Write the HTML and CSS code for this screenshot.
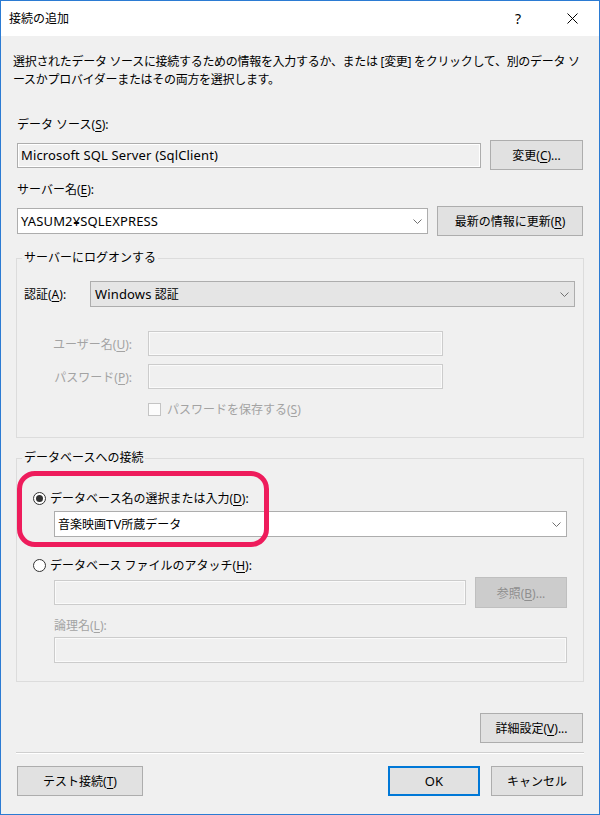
FILE: index.html
```html
<!DOCTYPE html>
<html lang="ja">
<head>
    <meta charset="UTF-8">
    <title>接続の追加</title>
    <link rel="stylesheet" href="styles.css">
</head>
<body>
    <div class="window">
        <div class="titlebar">
            <span class="title">接続の追加</span>
            <span class="help">?</span>
            <span class="close">
                <svg width="11" height="11" viewBox="0 0 11 11"><path d="M0.5 0.5 L10.5 10.5 M10.5 0.5 L0.5 10.5" stroke="#000" stroke-width="1" fill="none"/></svg>
            </span>
        </div>

        <div class="content">
            <p class="desc">選択されたデータ ソースに接続するための情報を入力するか、または [変更] をクリックして、別のデータ ソ<br>ースかプロバイダーまたはその両方を選択します。</p>

            <div class="label lbl-source">データ ソース(<u>S</u>):</div>
            <div class="row row-source">
                <div class="field readonly"><span class="en">Microsoft SQL Server (SqlClient)</span></div>
                <button class="btn btn-change">変更(<u>C</u>)...</button>
            </div>

            <div class="label lbl-server">サーバー名(<u>E</u>):</div>
            <div class="row row-server">
                <div class="field combo server-combo">
                    <span class="value en">YASUM2¥SQLEXPRESS</span>
                    <svg class="chev" width="9" height="5" viewBox="0 0 9 5"><path d="M0.5 0.5 L4.5 4.5 L8.5 0.5" fill="none" stroke="#707070"/></svg>
                </div>
                <button class="btn btn-refresh">最新の情報に更新(<u>R</u>)</button>
            </div>

            <fieldset class="group group-logon">
                <legend>サーバーにログオンする</legend>
                <div class="row auth-row">
                    <span class="auth-label">認証(<u>A</u>):</span>
                    <div class="field dropdown">
                        <span class="value"><span class="en">Windows</span> 認証</span>
                        <svg class="chev" width="9" height="5" viewBox="0 0 9 5"><path d="M0.5 0.5 L4.5 4.5 L8.5 0.5" fill="none" stroke="#707070"/></svg>
                    </div>
                </div>
                <div class="row cred-row user-row">
                    <span class="cred-label disabled">ユーザー名(<u>U</u>):</span>
                    <div class="field off cred-input"></div>
                </div>
                <div class="row cred-row pass-row">
                    <span class="cred-label disabled">パスワード(<u>P</u>):</span>
                    <div class="field off cred-input"></div>
                </div>
                <div class="row check-row">
                    <span class="checkbox"></span>
                    <span class="disabled">パスワードを保存する(<u>S</u>)</span>
                </div>
            </fieldset>

            <fieldset class="group group-db">
                <legend>データベースへの接続</legend>
                <div class="row radio-row radio-first">
                    <span class="radio checked"></span>
                    <span>データベース名の選択または入力(<u>D</u>):</span>
                </div>
                <div class="field combo db-combo">
                    <span class="value">音楽映画<span class="en">TV</span>所蔵データ</span>
                    <svg class="chev" width="9" height="5" viewBox="0 0 9 5"><path d="M0.5 0.5 L4.5 4.5 L8.5 0.5" fill="none" stroke="#707070"/></svg>
                </div>
                <div class="row radio-row radio-second">
                    <span class="radio"></span>
                    <span>データベース ファイルのアタッチ(<u>H</u>):</span>
                </div>
                <div class="row attach-row">
                    <div class="field off attach-input"></div>
                    <button class="btn btn-browse" disabled>参照(<u>B</u>)...</button>
                </div>
                <div class="label disabled lbl-logical">論理名(<u>L</u>):</div>
                <div class="field off logical-input"></div>
            </fieldset>

            <div class="row row-advanced">
                <button class="btn btn-advanced">詳細設定(<u>V</u>)...</button>
            </div>

            <div class="separator"></div>

            <div class="row row-bottom">
                <button class="btn btn-test">テスト接続(<u>T</u>)</button>
                <span class="spacer"></span>
                <button class="btn btn-ok"><span class="en">OK</span></button>
                <button class="btn btn-cancel">キャンセル</button>
            </div>
        </div>

        <div class="highlight"></div>
    </div>
</body>
</html>
```

FILE: styles.css
```css
* {
    box-sizing: border-box;
}
body {
    margin: 0;
    background: #fff;
    font-family: "Noto Sans", "Noto Sans CJK JP", sans-serif;
    font-size: 12px;
    color: #000;
}
u {
    text-underline-offset: 2px;
}
.en {
    font-size: 13px;
    letter-spacing: 0.15px;
}
.window {
    position: relative;
    width: 600px;
    height: 815px;
    border: 1px solid #2b7bd3;
    background: #f0f0f0;
    display: flex;
    flex-direction: column;
}
.titlebar {
    height: 35px;
    background: #fff;
    display: flex;
    align-items: center;
    padding-left: 8px;
    padding-right: 4px;
    line-height: 18px;
}
.title {
    flex: 1;
}
.help {
    width: 40px;
    text-align: center;
    font-size: 14px;
}
.close {
    width: 46px;
    margin-left: 11px;
    display: flex;
    justify-content: center;
}
.content {
    padding: 0 16px;
}
.desc {
    margin: 17px 0 0 -4px;
    line-height: 18px;
    letter-spacing: -0.3px;
    white-space: nowrap;
}
.label {
    line-height: 18px;
}
.disabled {
    color: #a3a3a3;
}
.row {
    display: flex;
    align-items: center;
}
.field {
    height: 25px;
    line-height: 23px;
    padding-left: 3px;
    border: 1px solid #adadad;
    background: #fff;
    white-space: nowrap;
}
.field.readonly {
    background: #f0f0f0;
    box-shadow: inset 0 0 0 1px #fff;
}
.field.off {
    background: #f0f0f0;
    border-color: #cccccc;
    box-shadow: inset 0 0 0 1px #fafafa;
}
.combo, .dropdown {
    display: flex;
    align-items: center;
    height: 26px;
}
.combo .value, .dropdown .value {
    flex: 1;
}
.chev {
    margin-right: 5px;
}
.dropdown {
    flex: 1;
    background: #e5e5e5;
    padding-left: 4px;
}
.btn {
    height: 30px;
    padding: 0;
    border: 1px solid #adadad;
    background: #e1e1e1;
    font-family: inherit;
    font-size: 12px;
    color: #000;
}

.lbl-source {
    margin-top: 27px;
}
.row-source {
    margin-top: 6px;
    gap: 9px;
}
.row-source .field {
    flex: 1;
}
.btn-change {
    width: 93px;
}
.lbl-server {
    margin-top: 11px;
}
.row-server {
    margin-top: 7px;
    gap: 9px;
}
.server-combo {
    flex: 1;
}
.btn-refresh {
    width: 146px;
}

.group {
    margin: 0 -1px;
    padding: 0 8px 0 7px;
    border: 1px solid #dcdcdc;
    min-width: 0;
}
.group legend {
    padding: 0 2px;
    margin-left: -2px;
    line-height: 18px;
}
.group-logon {
    margin-top: 13px;
    padding-bottom: 19px;
}
.auth-row {
    margin-top: 14px;
}
.auth-label {
    width: 66px;
}
.cred-row {
    gap: 16px;
}
.cred-label {
    width: 108px;
    text-align: right;
}
.cred-input {
    width: 295px;
}
.user-row {
    margin-top: 24px;
}
.pass-row {
    margin-top: 8px;
}
.check-row {
    margin-top: 11px;
    margin-left: 124px;
    height: 18px;
    gap: 6px;
}
.checkbox {
    width: 13px;
    height: 13px;
    border: 1px solid #c4c4c4;
    background: #fcfcfc;
}

.group-db {
    margin-top: 11px;
    padding-bottom: 18px;
}
.radio-row {
    height: 18px;
    padding-left: 9px;
    gap: 4px;
}
.radio-first {
    margin-top: 22px;
}
.radio-second {
    margin-top: 19px;
}
.radio {
    width: 13px;
    height: 13px;
    border: 1px solid #333;
    border-radius: 50%;
    background: #fff;
    display: flex;
    align-items: center;
    justify-content: center;
}
.radio.checked::after {
    content: "";
    width: 7px;
    height: 7px;
    border-radius: 50%;
    background: #333;
}
.db-combo {
    margin: 4px 8px 0 30px;
}
.attach-row {
    margin: 3px 8px 0 30px;
    gap: 9px;
}
.attach-input {
    flex: 1;
}
.btn-browse {
    width: 92px;
    height: 31px;
    background: #cccccc;
    border-color: #bfbfbf;
    color: #8f8f8f;
}
.lbl-logical {
    margin: 9px 0 0 30px;
}
.logical-input {
    margin: 2px 8px 0 30px;
    height: 26px;
}

.row-advanced {
    margin-top: 31px;
    justify-content: flex-end;
}
.btn-advanced {
    width: 103px;
}
.separator {
    margin: 9px -1px 0;
    border-top: 1px solid #cfcfcf;
    border-bottom: 1px solid #fff;
}
.row-bottom {
    margin-top: 12px;
}
.spacer {
    flex: 1;
}
.btn-test {
    width: 126px;
}
.btn-ok {
    width: 92px;
    border: 2px solid #0078d7;
}
.btn-cancel {
    width: 92px;
    margin-left: 11px;
}

/* 注釈の枠 */
.highlight {
    position: absolute;
    left: 16px;
    top: 470px;
    width: 252px;
    height: 76px;
    border: 5px solid #ee1c5c;
    border-radius: 18px;
}
```
